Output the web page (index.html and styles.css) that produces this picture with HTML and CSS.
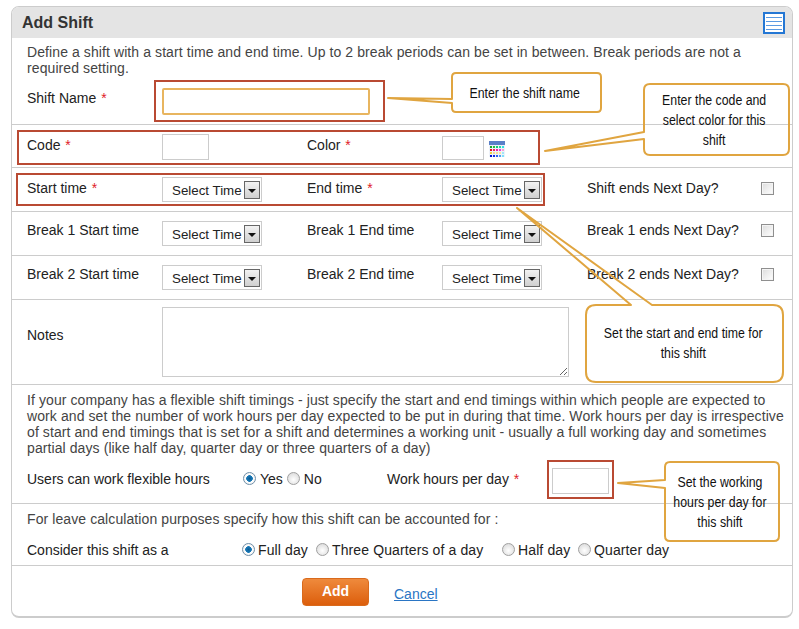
FILE: index.html
```html
<!DOCTYPE html>
<html lang="en">
<head>
<meta charset="utf-8">
<title>Add Shift</title>
<link rel="stylesheet" href="styles.css">
</head>
<body>
<main class="card">
  <header class="card-head">
    <h1>Add Shift</h1>
    <svg class="head-icon" width="22" height="22" viewBox="0 0 22 22" shape-rendering="crispEdges"><rect x="1" y="1" width="20" height="20" fill="#fff" stroke="#2477d4" stroke-width="2"/><path d="M3 5.500h16M3 9.500h16M3 13.500h16M3 17.500h16" stroke="#5a9ae2" stroke-width="1"/></svg>
  </header>

  <section class="sec-first">
    <p class="note">Define a shift with a start time and end time. Up to 2 break periods can be set in between. Break periods are not a required setting.</p>
    <div class="name-row">
      <label class="lbl">Shift Name <em>*</em></label>
      <input class="inp inp-name" type="text">
    </div>
  </section>

  <section class="row row-code">
    <label class="lbl">Code <em>*</em></label>
    <div><input class="inp inp-code" type="text"></div>
    <label class="lbl">Color <em>*</em></label>
    <div class="color-cell">
      <input class="inp inp-color" type="text">
      <svg class="cal" width="16" height="16" viewBox="0 0 16 16" shape-rendering="crispEdges">
        <rect width="16" height="16" fill="#eef2fa"/><rect width="16" height="4" fill="#5a80c8"/>
        <g>
          <rect x="1" y="5" width="2" height="2" fill="#1aa52a"/><rect x="4" y="5" width="2" height="2" fill="#20c040"/><rect x="7" y="5" width="2" height="2" fill="#10d070"/><rect x="10" y="5" width="2" height="2" fill="#20e0a0"/><rect x="13" y="5" width="2" height="2" fill="#30e0e0"/>
          <rect x="1" y="8" width="2" height="2" fill="#e01020"/><rect x="4" y="8" width="2" height="2" fill="#f02060"/><rect x="7" y="8" width="2" height="2" fill="#f020a0"/><rect x="10" y="8" width="2" height="2" fill="#f030e0"/><rect x="13" y="8" width="2" height="2" fill="#f8a0d0"/>
          <rect x="1" y="11" width="2" height="2" fill="#f0d040"/><rect x="4" y="11" width="2" height="2" fill="#f8d890"/><rect x="7" y="11" width="2" height="2" fill="#f8e090"/><rect x="10" y="11" width="2" height="2" fill="#f8e8a0"/><rect x="13" y="11" width="2" height="2" fill="#a0e8f8"/>
          <rect x="1" y="14" width="2" height="2" fill="#0010d0"/><rect x="4" y="14" width="2" height="2" fill="#1030e0"/><rect x="7" y="14" width="2" height="2" fill="#3060f0"/><rect x="10" y="14" width="2" height="2" fill="#50a0f0"/><rect x="13" y="14" width="2" height="2" fill="#80e0f8"/>
        </g>
      </svg>
    </div>
  </section>

  <section class="row row-time">
    <label class="lbl">Start time <em>*</em></label>
    <div class="sel"><span>Select Time</span><i class="sel-btn"></i></div>
    <label class="lbl">End time <em>*</em></label>
    <div class="sel"><span>Select Time</span><i class="sel-btn"></i></div>
    <label class="lbl">Shift ends Next Day?</label>
    <i class="check"></i>
  </section>

  <section class="row row-time row-break">
    <label class="lbl">Break 1 Start time</label>
    <div class="sel"><span>Select Time</span><i class="sel-btn"></i></div>
    <label class="lbl">Break 1 End time</label>
    <div class="sel"><span>Select Time</span><i class="sel-btn"></i></div>
    <label class="lbl">Break 1 ends Next Day?</label>
    <i class="check"></i>
  </section>

  <section class="row row-time row-break">
    <label class="lbl">Break 2 Start time</label>
    <div class="sel"><span>Select Time</span><i class="sel-btn"></i></div>
    <label class="lbl">Break 2 End time</label>
    <div class="sel"><span>Select Time</span><i class="sel-btn"></i></div>
    <label class="lbl">Break 2 ends Next Day?</label>
    <i class="check"></i>
  </section>

  <section class="row-notes">
    <label class="lbl">Notes</label>
    <textarea class="notes"></textarea>
  </section>

  <section class="sec-flex">
    <p class="note">If your company has a flexible shift timings - just specify the start and end timings within which people are expected to work and set the number of work hours per day expected to be put in during that time. Work hours per day is irrespective of start and end timings that is set for a shift and determines a working unit - usually a full working day and sometimes partial days (like half day, quarter day or three quarters of a day)</p>
    <div class="flex-row">
      <label class="lbl lbl-flex">Users can work flexible hours</label>
      <div class="radios radios-yes">
        <i class="radio on"></i><span>Yes</span>
        <i class="radio"></i><span>No</span>
      </div>
      <label class="lbl lbl-hours">Work hours per day <em>*</em></label>
      <input class="inp inp-hours" type="text">
    </div>
  </section>

  <section class="sec-leave">
    <p class="note">For leave calculation purposes specify how this shift can be accounted for :</p>
    <div class="leave-row">
      <label class="lbl lbl-leave">Consider this shift as a</label>
      <div class="radios radios-leave">
        <span class="opt"><i class="radio on"></i><span>Full day</span></span>
        <span class="opt"><i class="radio"></i><span>Three Quarters of a day</span></span>
        <span class="opt"><i class="radio"></i><span>Half day</span></span>
        <span class="opt"><i class="radio"></i><span>Quarter day</span></span>
      </div>
    </div>
  </section>

  <footer class="actions">
    <button class="btn-add" type="button">Add</button>
    <a class="cancel" href="#">Cancel</a>
  </footer>
</main>

<div class="mark mark-name"></div>
<div class="mark mark-code"></div>
<div class="mark mark-time"></div>
<div class="mark mark-hours"></div>

<svg class="tails" width="799" height="629" viewBox="0 0 799 629" fill="none" stroke="#e0a540" stroke-width="2" stroke-linejoin="round">
  <path d="M456 73H597Q601 73 601 77V108Q601 112 597 112H456Q452 112 452 108V103L388 98L452 99V77Q452 73 456 73Z"/>
  <path d="M650 84H783Q789 84 789 90V149Q789 155 783 155H650Q644 155 644 149V139L545 151L644 132V90Q644 84 650 84Z"/>
  <path d="M596 305H631L517 208L652 305H773Q783 305 783 315V372Q783 382 773 382H596Q586 382 586 372V315Q586 305 596 305Z"/>
  <path d="M670 462H774Q779 462 779 467V536Q779 541 774 541H670Q665 541 665 536V488L618 483L665 480V467Q665 462 670 462Z"/>
</svg>

<div class="tip tip-name"><span>Enter the shift name</span></div>
<div class="tip tip-code"><span>Enter the code and<br>select color for this<br>shift</span></div>
<div class="tip tip-time"><span>Set the start and end time for<br>this shift</span></div>
<div class="tip tip-hours"><span>Set the working<br>hours per day for<br>this shift</span></div>
</body>
</html>
```
FILE: styles.css
```css
* { box-sizing: border-box; }
html, body { margin: 0; padding: 0; background: #fff; }
body {
  width: 799px;
  height: 629px;
  padding: 6px 0 0 11px;
  position: relative;
  overflow: hidden;
  font-family: "Liberation Sans", Arial, sans-serif;
  font-size: 14px;
  line-height: 16px;
  color: #222;
}
.card {
  width: 782px;
  height: 612px;
  border: 1px solid #ccc;
  border-bottom-width: 2px;
  border-radius: 8px;
  overflow: hidden;
  background: #fff;
}
.card-head {
  height: 31px;
  background: #e4e4e4;
  display: flex;
  align-items: center;
  justify-content: space-between;
  padding: 0 7px 0 10px;
}
.card-head h1 {
  margin: 0;
  font-size: 16px;
  font-weight: bold;
  color: #333;
}
.head-icon { display: block; margin-top: 1px; }

.note { margin: 0; color: #444; letter-spacing: 0.09px; }
em { font-style: normal; color: #e0202a; margin-left: 1px; }
.lbl { color: #222; display: block; }

.sec-first {
  height: 87px;
  padding: 6px 15px 0;
  border-bottom: 1px solid #ccc;
}
.name-row { display: flex; margin-top: 12px; }
.name-row .lbl { width: 135px; padding-top: 2px; }
.inp {
  display: block;
  border: 1px solid #ccc;
  background: #fff;
  padding: 0;
  margin: 0;
  border-radius: 0;
  outline: none;
}
.inp-name {
  width: 208px;
  height: 27px;
  border: 2px solid #e8b55f;
  border-radius: 2px;
}
.row {
  display: grid;
  grid-template-columns: 135px 145px 135px 145px 174px 13px;
  padding-left: 15px;
  border-bottom: 1px solid #ccc;
}
.row-code { height: 43px; padding-top: 9px; }
.row-code .lbl { padding-top: 3px; }
.row-time { height: 44px; padding-top: 9px; }
.row-time .lbl { padding-top: 3px; }
.row-break .lbl { padding-top: 1px; }
.row-break .check { margin-top: 3px; }
.inp-code { width: 47px; height: 26px; }
.color-cell { display: flex; align-items: flex-start; padding-top: 2px; }
.inp-color { width: 42px; height: 24px; }
.cal { margin: 5px 0 0 5px; display: block; }
.sel {
  width: 100px;
  height: 25px;
  border: 1px solid #ccc;
  position: relative;
  padding: 5px 0 0 9px;
  color: #222;
  font-size: 13.33px;
}
.sel-btn {
  position: absolute;
  right: 1px;
  top: 3px;
  width: 16px;
  height: 18px;
  border: 1px solid #666;
  background: linear-gradient(#f2f2f2, #d0d0d0);
}
.sel-btn::after {
  content: "";
  position: absolute;
  left: 3px;
  top: 7px;
  border: 4px solid transparent;
  border-bottom-width: 0;
  border-top-color: #111;
}
.check {
  display: block;
  width: 13px;
  height: 13px;
  margin-top: 5px;
  border: 1px solid #8f8f8f;
  background: linear-gradient(135deg, #dcdcdc, #fff);
  box-shadow: inset 0 0 0 1px #f4f4f4;
}
.row-notes {
  height: 85px;
  display: flex;
  padding: 7px 0 0 15px;
  border-bottom: 1px solid #ccc;
}
.row-notes .lbl { width: 135px; padding-top: 20px; }
.notes {
  display: block;
  width: 407px;
  height: 70px;
  border: 1px solid #ccc;
  margin: 0;
  padding: 0;
  outline: none;
}
.sec-flex {
  height: 119px;
  padding: 7px 0 0 15px;
  border-bottom: 1px solid #ccc;
}
.sec-flex .note { width: 762px; }
.flex-row { display: flex; align-items: center; margin-top: 3px; height: 40px; }
.lbl-flex { width: 216px; }
.radios { display: flex; align-items: center; }
.radios-yes { width: 144px; }
.radios-yes .radio { margin-right: 4px; margin-top: -2px; }
.radios-yes span { margin-right: 4px; }
.lbl-hours { width: 165px; }
.inp-hours { width: 57px; height: 26px; margin-top: 3px; }
.radio {
  display: block;
  flex: none;
  width: 13px;
  height: 13px;
  border-radius: 50%;
  border: 1px solid #a0a0a0;
  background: radial-gradient(circle at 50% 60%, #fff, #d4d4d4);
}
.radio.on {
  border-color: #6f8fa8;
  background: radial-gradient(circle, #0a5c96 0, #1a7ab8 3px, #fff 3.6px, #e4e4e4 100%);
}
.sec-leave {
  height: 62px;
  padding: 7px 0 0 15px;
  border-bottom: 1px solid #ccc;
}
.leave-row { display: flex; align-items: center; margin-top: 15px; }
.lbl-leave { width: 215px; }
.radios-leave .radio { margin-right: 3px; margin-top: -2px; }
.opt { display: flex; align-items: center; color: #222; letter-spacing: 0.12px; }
.radios-leave .opt:nth-child(1) { width: 74px; }
.radios-leave .opt:nth-child(2) { width: 186px; }
.radios-leave .opt:nth-child(3) { width: 76px; }
.actions {
  display: flex;
  align-items: flex-start;
  padding: 12px 0 0 290px;
}
.btn-add {
  width: 67px;
  height: 28px;
  border: 1px solid #d96a1c;
  border-radius: 4px;
  background: linear-gradient(#ef8a3c, #dc5e0c);
  color: #fff;
  font: bold 14px "Liberation Sans", Arial, sans-serif;
  padding: 0 0 2px;
}
.cancel {
  margin: 8px 0 0 25px;
  color: #2a75c4;
  text-decoration: underline;
}

.mark { position: absolute; border: 2px solid #b94a33; pointer-events: none; }
.mark-name { left: 154px; top: 80px; width: 231px; height: 42px; }
.mark-code { left: 17px; top: 130px; width: 523px; height: 35px; }
.mark-time { left: 16px; top: 173px; width: 529px; height: 33px; }
.mark-hours { left: 547px; top: 460px; width: 67px; height: 39px; }
.tails { position: absolute; left: 0; top: 0; pointer-events: none; }
.tip {
  position: absolute;
  display: flex;
  align-items: center;
  justify-content: center;
  text-align: center;
  line-height: 20px;
  color: #111;
  white-space: nowrap;
}
.tip span { display: block; transform: scaleX(0.88); }
.tip-name { left: 452px; top: 73px; width: 146px; height: 39px; }
.tip-code { left: 644px; top: 90px; width: 140px; height: 60px; }
.tip-time { left: 586px; top: 323px; width: 195px; height: 40px; }
.tip-hours { left: 665px; top: 472px; width: 110px; height: 60px; }
```
